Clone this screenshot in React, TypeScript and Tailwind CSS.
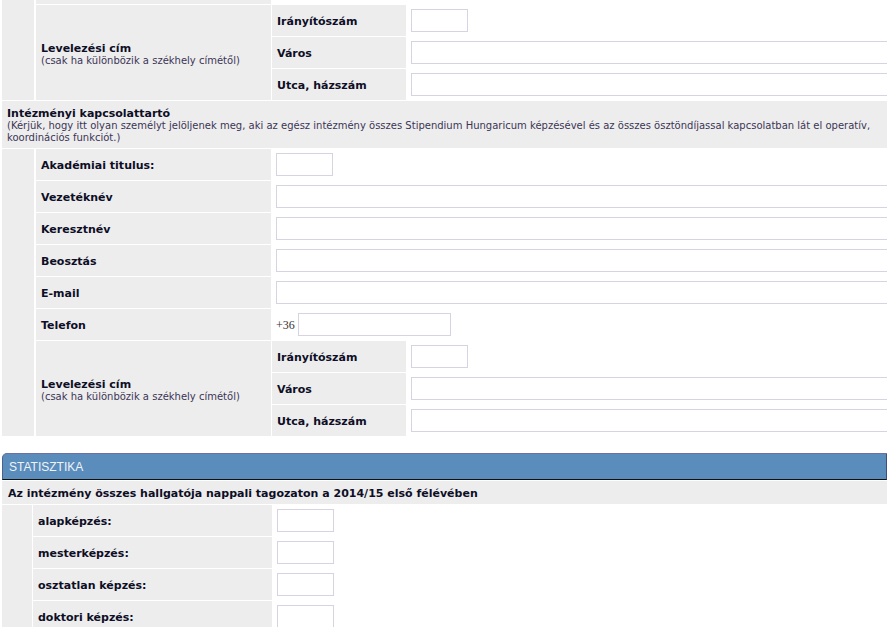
import React from 'react';

const cell = 'bg-[#ededed]';

const Input: React.FC<{ wide?: boolean; className?: string }> = ({ wide, className = '' }) => (
  <input
    type="text"
    className={`h-[23px] shrink-0 border border-[#d6d4e2] bg-white outline-none ${wide ? 'w-[640px]' : 'w-[57px]'} ${className}`}
  />
);

const Label: React.FC<{ children: React.ReactNode; className?: string }> = ({ children, className = '' }) => (
  <div className={`${cell} flex items-center pl-[5px] pt-[4px] font-bold text-[#0e0e26] ${className}`}>{children}</div>
);

const Row: React.FC<{ label: string; children: React.ReactNode }> = ({ label, children }) => (
  <div className="flex h-[31px]">
    <Label className="w-[235px]">{label}</Label>
    <div className="flex min-w-0 flex-1 items-center overflow-hidden pl-[5px]">{children}</div>
  </div>
);

const AddressBlock: React.FC = () => (
  <div className="flex gap-[1px]">
    <div className={`${cell} flex w-[235px] flex-col justify-center pl-[5px] pt-[4px]`}>
      <div className="font-bold text-[11px] leading-[12px] text-[#0e0e26]">Levelezési cím</div>
      <div className="text-[10px] leading-[12px] text-[#3b3556]">(csak ha különbözik a székhely címétől)</div>
    </div>
    <div className="flex min-w-0 flex-1 flex-col gap-[1px]">
      {[
        ['Irányítószám', false],
        ['Város', true],
        ['Utca, házszám', true],
      ].map(([l, w]) => (
        <div key={l as string} className="flex h-[31px]">
          <Label className="w-[134px]">{l as string}</Label>
          <div className="flex min-w-0 flex-1 items-center overflow-hidden pl-[5px]">
            <Input wide={w as boolean} />
          </div>
        </div>
      ))}
    </div>
  </div>
);

const App: React.FC = () => {
  return (
    <div className="h-[627px] w-[887px] overflow-hidden bg-white pl-[2px] font-['DejaVu_Sans',Verdana,sans-serif] text-[11px]">
      {/* végén a székhely blokk */}
      <div className="flex gap-[2px]">
        <div className={`${cell} w-[32px]`} />
        <div className="flex min-w-0 flex-1 flex-col gap-[1px]">
          <div className="flex h-[4px]">
            <div className={`${cell} w-[235px]`} />
            <div className="flex-1" />
          </div>
          <AddressBlock />
        </div>
      </div>

      <div className={`${cell} mt-[1px] h-[47px] px-[5px] pt-[7px]`}>
        <div className="font-bold text-[11px] leading-[12px] text-[#0e0e26]">Intézményi kapcsolattartó</div>
        <div className="text-[10px] leading-[12px] text-[#3b3556]">
          (Kérjük, hogy itt olyan személyt jelöljenek meg, aki az egész intézmény összes Stipendium Hungaricum képzésével és az összes ösztöndíjassal kapcsolatban lát el operatív, koordinációs funkciót.)
        </div>
      </div>

      <div className="mt-[1px] flex gap-[2px]">
        <div className={`${cell} w-[32px]`} />
        <div className="flex min-w-0 flex-1 flex-col gap-[1px]">
          <Row label="Akadémiai titulus:">
            <Input />
          </Row>
          <Row label="Vezetéknév">
            <Input wide />
          </Row>
          <Row label="Keresztnév">
            <Input wide />
          </Row>
          <Row label="Beosztás">
            <Input wide />
          </Row>
          <Row label="E-mail">
            <Input wide />
          </Row>
          <Row label="Telefon">
            <span className="mr-[3px] font-['Liberation_Serif',serif] text-[12px] text-[#333]">+36</span>
            <Input className="w-[153px]" />
          </Row>
          <AddressBlock />
        </div>
      </div>

      <div className="mt-[17px] flex h-[27px] items-center rounded-tl-[5px] border border-b-[#111] border-l-[#4c5f8e] border-r-[#3d4f7a] border-t-[#6a70a4] bg-[#5a8cbc] pl-[6px] font-['Liberation_Sans',Arial,sans-serif] text-[12px] text-[#eef3f8]">
        STATISZTIKA
      </div>

      <div className={`${cell} mt-[1px] flex h-[23px] items-center pl-[6px] pt-[4px] font-bold text-[#0e0e26]`}>
        Az intézmény összes hallgatója nappali tagozaton a 2014/15 első félévében
      </div>

      <div className="mt-[1px] flex gap-[1px]">
        <div className={`${cell} w-[30px]`} />
        <div className="flex min-w-0 flex-1 flex-col gap-[1px]">
          {['alapképzés:', 'mesterképzés:', 'osztatlan képzés:', 'doktori képzés:'].map((l) => (
            <div key={l} className="flex h-[31px]">
              <Label className="w-[239px]">{l}</Label>
              <div className="flex flex-1 items-center pl-[5px]">
                <Input />
              </div>
            </div>
          ))}
        </div>
      </div>
    </div>
  );
};

export default App;
